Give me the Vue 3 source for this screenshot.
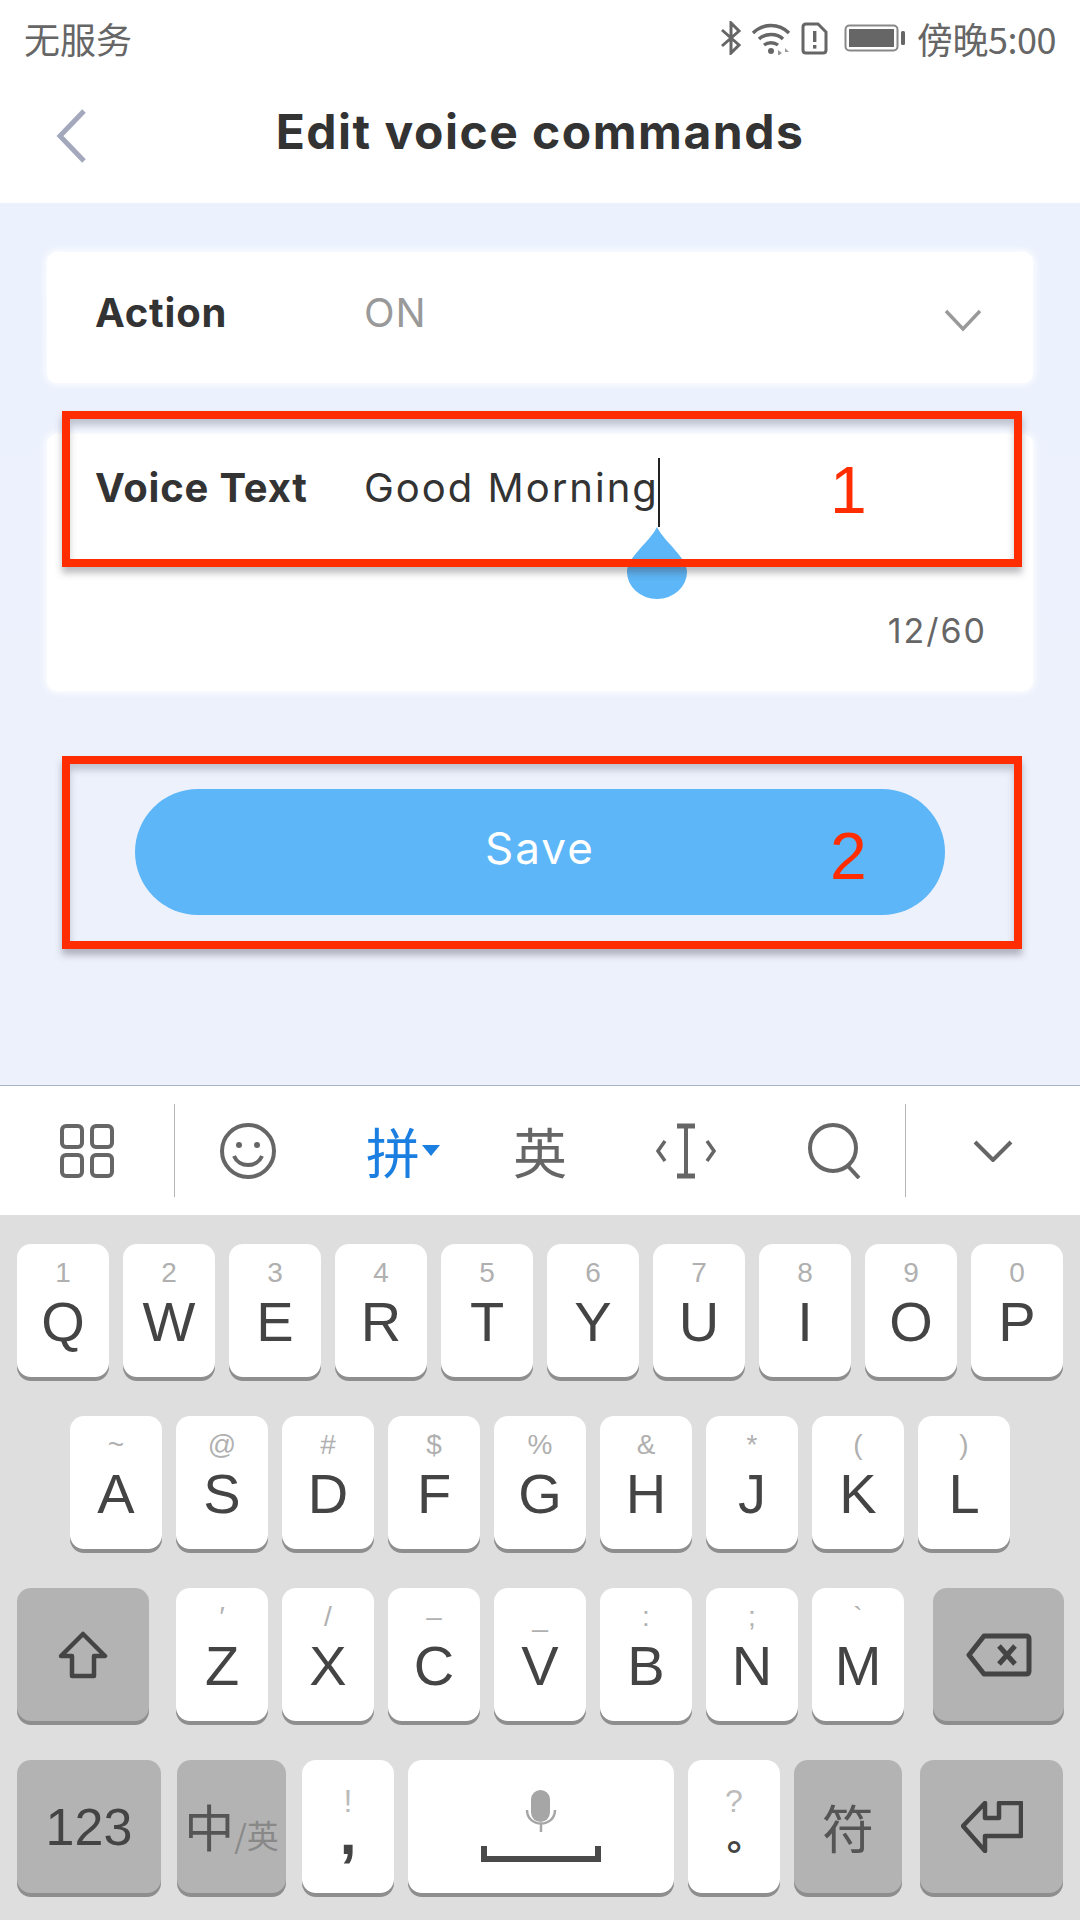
<template>
  <div class="screen">
    <div class="status-bar">
      <span class="carrier">无服务</span>
      <div class="status-right">
        <svg class="ic-bt" width="22" height="34" viewBox="0 0 22 34" fill="none" stroke="#666" stroke-width="3">
          <path d="M2 9 L19 24 L11 32 V2 L19 10 L2 25" />
        </svg>
        <svg class="ic-wifi" width="40" height="33" viewBox="0 0 40 33" fill="none" stroke="#666" stroke-width="3.4">
          <path d="M2 11 C12 1 28 1 38 11" />
          <path d="M8 17 C14 11 26 11 32 17" />
          <path d="M13 23 C17 20 23 20 27 23" />
          <circle cx="20" cy="29" r="3" fill="#666" stroke="none" />
          <path d="M31 31 l-4 -3 v6z M34 26 l4 4 h-4z" fill="#999" stroke="none" />
        </svg>
        <svg class="ic-sim" width="27" height="33" viewBox="0 0 27 33" fill="none">
          <path d="M5 2 H17 L25 10 V28 Q25 31 22 31 H5 Q2 31 2 28 V5 Q2 2 5 2Z" stroke="#666" stroke-width="3" />
          <rect x="12" y="9" width="3.4" height="11" fill="#666" />
          <rect x="12" y="23" width="3.4" height="3.6" fill="#666" />
        </svg>
        <svg class="ic-bat" width="61" height="28" viewBox="0 0 61 28" fill="none">
          <rect x="1.5" y="1.5" width="52" height="25" rx="4" stroke="#888" stroke-width="2" />
          <rect x="5" y="5" width="45" height="18" fill="#666" />
          <rect x="57" y="7" width="4" height="14" rx="1.5" fill="#666" />
        </svg>
        <span class="clock">傍晚5:00</span>
      </div>
    </div>

    <div class="header">
      <svg class="back" width="30" height="54" viewBox="0 0 30 54" fill="none" stroke="#a3a8bd" stroke-width="5">
        <path d="M28 2 L4 27 L28 52" />
      </svg>
      <span class="title">Edit voice commands</span>
    </div>

    <div class="main">
      <div class="card card-action">
        <div class="row">
          <span class="label">Action</span>
          <span class="value muted">ON</span>
          <svg class="drop-arrow" width="38" height="23" viewBox="0 0 38 23" fill="none" stroke="#999" stroke-width="3.4">
            <path d="M2 2 L19 20 L36 2" />
          </svg>
        </div>
      </div>

      <div class="card card-voice">
        <div class="row">
          <span class="label">Voice Text</span>
          <span class="value typed">Good Morning<i class="caret"></i>
            <svg class="handle" width="60" height="72" viewBox="0 0 60 72">
              <path d="M30 0 C38 16 60 30 60 45 A30 27 0 0 1 0 45 C0 30 22 16 30 0Z" fill="#5db6f7" />
            </svg>
          </span>
        </div>
        <div class="counter">12/60</div>
      </div>

      <div class="save">Save</div>

      <div class="mark mark-one"><span>1</span></div>
      <div class="mark mark-two"><span>2</span></div>
    </div>

    <div class="toolbar">
      <div class="tool tool-side">
        <svg width="56" height="56" viewBox="0 0 56 56" fill="none" stroke="#666" stroke-width="4">
          <rect x="3" y="3" width="20" height="21" rx="4" />
          <rect x="33" y="3" width="20" height="21" rx="4" />
          <rect x="3" y="32" width="20" height="21" rx="4" />
          <rect x="33" y="32" width="20" height="21" rx="4" />
        </svg>
      </div>
      <i class="divider"></i>
      <div class="tool">
        <svg width="58" height="58" viewBox="0 0 58 58" fill="none" stroke="#666" stroke-width="4">
          <circle cx="29" cy="29" r="26" />
          <circle cx="20" cy="23" r="3" fill="#666" stroke="none" />
          <circle cx="38" cy="23" r="3" fill="#666" stroke="none" />
          <path d="M15 34 C20 46 38 46 43 34" />
        </svg>
      </div>
      <div class="tool">
        <span class="pin">拼</span>
        <i class="pin-arrow"></i>
      </div>
      <div class="tool"><span class="ying">英</span></div>
      <div class="tool">
        <svg width="60" height="56" viewBox="0 0 60 56" fill="none" stroke="#666" stroke-width="4">
          <path d="M9 18 L2 28 L9 38 M51 18 L58 28 L51 38" stroke-width="3.5" />
          <path d="M30 3 V53" />
          <path d="M21 3 H39 M21 53 H39" stroke-width="5" />
        </svg>
      </div>
      <div class="tool tool-search">
        <svg width="56" height="56" viewBox="0 0 56 56" fill="none" stroke="#666" stroke-width="4">
          <circle cx="26" cy="25" r="23" />
          <path d="M40 42 L52 55" />
        </svg>
      </div>
      <i class="divider"></i>
      <div class="tool tool-side">
        <svg width="40" height="22" viewBox="0 0 40 22" fill="none" stroke="#666" stroke-width="4">
          <path d="M2 2 L20 20 L38 2" />
        </svg>
      </div>
    </div>

    <div class="keyboard">
      <div class="key-row">
        <div v-for="k in rowOne" :key="k[0]" class="key">
          <span class="hint">{{ k[1] }}</span>
          <span class="letter">{{ k[0] }}</span>
        </div>
      </div>
      <div class="key-row row-two">
        <div v-for="k in rowTwo" :key="k[0]" class="key">
          <span class="hint">{{ k[1] }}</span>
          <span class="letter">{{ k[0] }}</span>
        </div>
      </div>
      <div class="key-row row-three">
        <div class="key dark key-shift">
          <svg width="50" height="48" viewBox="0 0 50 48" fill="none" stroke="#444" stroke-width="4.5">
            <path d="M25 3 L47 25 H36 V45 H14 V25 H3 Z" stroke-linejoin="round" />
          </svg>
        </div>
        <div v-for="k in rowThree" :key="k[0]" class="key">
          <span class="hint">{{ k[1] }}</span>
          <span class="letter">{{ k[0] }}</span>
        </div>
        <div class="key dark key-back">
          <svg width="66" height="44" viewBox="0 0 66 44" fill="none" stroke="#444" stroke-width="5">
            <path d="M18 3 H60 Q63 3 63 6 V38 Q63 41 60 41 H18 L3 22 Z" stroke-linejoin="round" />
            <path d="M33 13 L49 31 M49 13 L33 31" />
          </svg>
        </div>
      </div>
      <div class="key-row row-four">
        <div class="key dark key-num">123</div>
        <div class="key dark key-lang"><span class="zh">中</span><span class="en">/英</span></div>
        <div class="key key-punct">
          <span class="punct-hint">!</span>
          <span class="punct">,</span>
        </div>
        <div class="key key-space">
          <svg width="120" height="74" viewBox="0 0 120 74" fill="none">
            <rect x="50" y="0" width="19" height="32" rx="9.5" fill="#a6a6a6" />
            <path d="M46 20 C46 38 74 38 74 20 M60 33 V42" stroke="#a6a6a6" stroke-width="2.5" />
            <path d="M3 56 V69 H117 V56" stroke="#4a4a4a" stroke-width="6" />
          </svg>
        </div>
        <div class="key key-punct">
          <span class="punct-hint">?</span>
          <span class="stop">。</span>
        </div>
        <div class="key dark key-fu">符</div>
        <div class="key dark key-enter">
          <svg width="62" height="52" viewBox="0 0 62 52" fill="none" stroke="#444" stroke-width="4.5">
            <path d="M2 25 L24 2 V17 H38 V2 H60 V35 H24 V50 Z" stroke-linejoin="round" />
          </svg>
        </div>
      </div>
    </div>
  </div>
</template>

<script setup>
const rowOne = [['Q', '1'], ['W', '2'], ['E', '3'], ['R', '4'], ['T', '5'], ['Y', '6'], ['U', '7'], ['I', '8'], ['O', '9'], ['P', '0']]
const rowTwo = [['A', '~'], ['S', '@'], ['D', '#'], ['F', '$'], ['G', '%'], ['H', '&'], ['J', '*'], ['K', '('], ['L', ')']]
const rowThree = [['Z', '′'], ['X', '/'], ['C', '–'], ['V', '_'], ['B', ':'], ['N', ';'], ['M', '`']]
</script>

<style scoped>
.screen {
  width: 1080px;
  height: 1920px;
  overflow: hidden;
  background: #fff;
  display: flex;
  flex-direction: column;
  font-family: Inter, "Noto Sans CJK SC", sans-serif;
}

.status-bar {
  height: 76px;
  padding: 0 24px;
  display: flex;
  align-items: center;
  justify-content: space-between;
  color: #666;
  font-family: "Noto Sans CJK SC", sans-serif;
  font-size: 36px;
}

.status-right {
  display: flex;
  align-items: center;
}

.ic-wifi { margin-left: 9px; }
.ic-sim { margin-left: 10px; }
.ic-bat { margin-left: 16px; }

.clock {
  margin-left: 12px;
  letter-spacing: -0.5px;
}

.header {
  height: 127px;
  position: relative;
  display: flex;
  align-items: center;
  justify-content: center;
}

.back {
  position: absolute;
  left: 56px;
  top: 33px;
}

.title {
  font-size: 48px;
  font-weight: 700;
  letter-spacing: 1.5px;
  color: #333;
  padding-bottom: 17px;
}

.main {
  height: 882px;
  padding: 49px 47px 0;
  box-sizing: border-box;
  position: relative;
  background: linear-gradient(#ebf1fd, #edf1fc);
  display: flex;
  flex-direction: column;
}

.card {
  background: #fff;
  border-radius: 10px;
  box-shadow: 0 0 7px 2px rgba(255, 255, 255, 0.9);
}

.card-action {
  height: 131px;
  padding-top: 31px;
  box-sizing: border-box;
}

.card-voice {
  height: 257px;
  margin-top: 51px;
  padding-top: 24px;
  box-sizing: border-box;
}

.row {
  height: 58px;
  padding-left: 48px;
  display: flex;
  align-items: center;
}

.label {
  width: 269px;
  flex-shrink: 0;
  font-size: 40px;
  font-weight: 700;
  letter-spacing: 0.8px;
  color: #333;
}

.value {
  font-size: 40px;
  color: #333;
}

.muted {
  color: #999;
  letter-spacing: 1px;
}

.typed {
  position: relative;
  white-space: nowrap;
  letter-spacing: 2px;
}

.caret {
  position: absolute;
  right: -1px;
  top: -5px;
  width: 2px;
  height: 69px;
  background: #222;
}

.handle {
  position: absolute;
  right: -28px;
  top: 64px;
}

.drop-arrow {
  margin-left: auto;
  margin-right: 51px;
  margin-top: 16px;
}

.counter {
  margin-top: 94px;
  padding-right: 46px;
  text-align: right;
  font-size: 34px;
  letter-spacing: 2px;
  color: #666;
}

.save {
  height: 126px;
  margin: 98px 88px 0;
  border-radius: 63px;
  background: #5db6f7;
  color: #fff;
  font-size: 44px;
  letter-spacing: 2px;
  display: flex;
  align-items: center;
  justify-content: center;
  padding-bottom: 8px;
  box-sizing: border-box;
}

.mark {
  position: absolute;
  left: 62px;
  width: 960px;
  box-sizing: border-box;
  border: 8px solid #ff2d00;
  box-shadow: 0 6px 7px rgba(60, 60, 70, 0.35), inset 0 6px 7px rgba(60, 60, 70, 0.25);
}

.mark span {
  position: absolute;
  left: 760px;
  font-family: "Liberation Sans", sans-serif;
  font-size: 66px;
  line-height: 66px;
  color: #ff2d00;
}

.mark-one {
  top: 208px;
  height: 156px;
}

.mark-one span { top: 38px; }

.mark-two {
  top: 553px;
  height: 193px;
}

.mark-two span { top: 59px; }

.toolbar {
  height: 130px;
  border-top: 1px solid #a9b3c6;
  box-sizing: border-box;
  display: flex;
  align-items: center;
  background: #fff;
}

.tool {
  flex: 1;
  display: flex;
  align-items: center;
  justify-content: center;
  color: #666;
}

.tool-side {
  flex: 0 0 174px;
}

.tool-search svg {
  margin-left: 6px;
}

.divider {
  width: 1px;
  height: 93px;
  background: #b5b5b5;
}

.pin {
  font-family: "Noto Sans CJK SC", sans-serif;
  font-size: 54px;
  color: #1a7fe0;
  margin-left: 18px;
}

.pin-arrow {
  width: 0;
  height: 0;
  margin-left: 2px;
  border-left: 9px solid transparent;
  border-right: 9px solid transparent;
  border-top: 11px solid #1a7fe0;
}

.ying {
  font-family: "Noto Sans CJK SC", sans-serif;
  font-size: 54px;
}

.keyboard {
  flex: 1;
  background: #dedede;
  padding-top: 29px;
  display: flex;
  flex-direction: column;
  gap: 39px;
}

.key-row {
  display: flex;
  gap: 14px;
  padding-left: 17px;
}

.row-two {
  padding-left: 70px;
}

.key {
  width: 92px;
  height: 133px;
  flex-shrink: 0;
  box-sizing: border-box;
  background: #fff;
  border-radius: 14px;
  box-shadow: 0 4px 0 #8e8e8e;
  display: flex;
  flex-direction: column;
  align-items: center;
  padding-top: 9px;
  font-family: "Liberation Sans", sans-serif;
}

.hint {
  height: 39px;
  line-height: 39px;
  font-size: 28px;
  color: #b0b0b0;
}

.letter {
  height: 60px;
  line-height: 60px;
  font-size: 56px;
  color: #444;
}

.dark {
  background: #b3b3b3;
  padding-top: 0;
  justify-content: center;
  color: #444;
}

.key-shift {
  width: 132px;
  margin-right: 13px;
}

.key-back {
  width: 131px;
  margin-left: 15px;
}

.key-num {
  width: 144px;
  margin-right: 2px;
  font-size: 52px;
}

.key-lang {
  width: 109px;
  margin-right: 2px;
  flex-direction: row;
  align-items: center;
  font-family: "Noto Sans CJK SC", sans-serif;
}

.zh {
  font-size: 50px;
  color: #555;
  margin-bottom: 4px;
}

.en {
  font-size: 32px;
  color: #888;
  margin-top: 14px;
  white-space: nowrap;
}

.key-punct {
  padding-top: 23px;
}

.punct-hint {
  height: 36px;
  line-height: 36px;
  font-size: 32px;
  color: #bbb;
}

.punct {
  height: 28px;
  line-height: 28px;
  font-size: 62px;
  font-weight: 700;
  color: #444;
}

.stop {
  height: 40px;
  line-height: 40px;
  margin-top: 6px;
  font-size: 38px;
  font-weight: 700;
  color: #444;
  font-family: "Noto Sans CJK TC", sans-serif;
}

.key-space {
  width: 266px;
  padding-top: 30px;
}

.key-fu {
  width: 108px;
  font-family: "Noto Sans CJK SC", sans-serif;
  font-size: 52px;
  color: #555;
}

.key-enter {
  width: 143px;
  margin-left: 4px;
}
</style>
